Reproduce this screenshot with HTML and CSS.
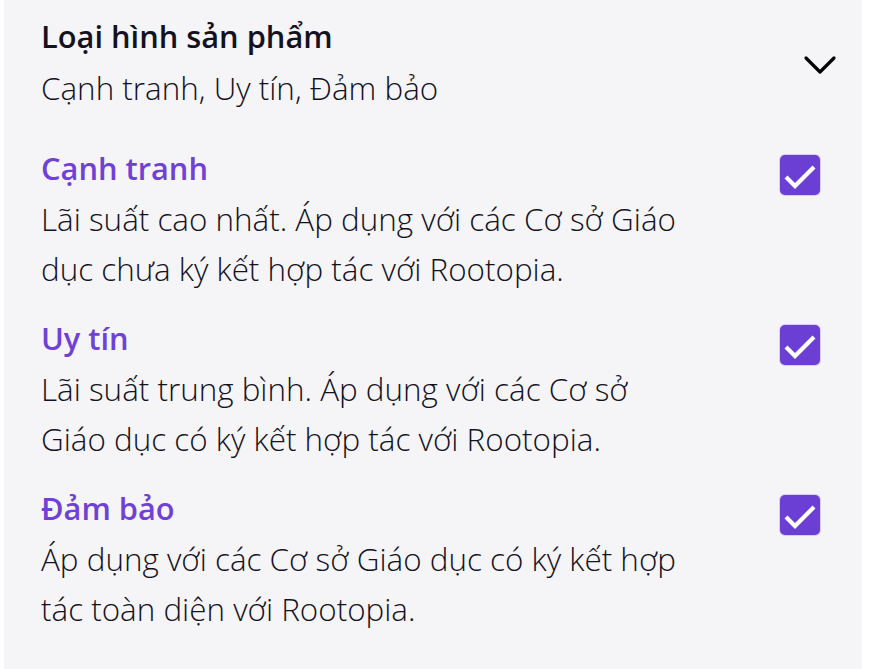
FILE: index.html
```html
<!DOCTYPE html>
<html lang="vi">
<head>
<meta charset="utf-8">
<link rel="stylesheet" href="styles.css">
</head>
<body>
<div class="panel">
  <div class="header">
    <div class="header-text">
      <div class="header-title">Loại hình sản phẩm</div>
      <div class="header-sub">Cạnh tranh, Uy tín, Đảm bảo</div>
    </div>
    <svg class="chevron" width="34" height="20" viewBox="0 0 34 20"><path d="M3 3 L17 17 L31 3" fill="none" stroke="#000" stroke-width="3.2" stroke-linecap="round" stroke-linejoin="round"/></svg>
  </div>
  <div class="items">
    <div class="item">
      <div class="item-text">
        <div class="item-title">Cạnh tranh</div>
        <div class="item-desc">Lãi suất cao nhất. Áp dụng với các Cơ sở Giáo dục chưa ký kết hợp tác với Rootopia.</div>
      </div>
      <div class="check"><svg width="40" height="40" viewBox="0 0 40 40"><path d="M6 22 L15 31 L34 12" fill="none" stroke="#fff" stroke-width="4.2"/></svg></div>
    </div>
    <div class="item">
      <div class="item-text">
        <div class="item-title">Uy tín</div>
        <div class="item-desc">Lãi suất trung bình. Áp dụng với các Cơ sở Giáo dục có ký kết hợp tác với Rootopia.</div>
      </div>
      <div class="check"><svg width="40" height="40" viewBox="0 0 40 40"><path d="M6 22 L15 31 L34 12" fill="none" stroke="#fff" stroke-width="4.2"/></svg></div>
    </div>
    <div class="item">
      <div class="item-text">
        <div class="item-title">Đảm bảo</div>
        <div class="item-desc">Áp dụng với các Cơ sở Giáo dục có ký kết hợp tác toàn diện với Rootopia.</div>
      </div>
      <div class="check"><svg width="40" height="40" viewBox="0 0 40 40"><path d="M6 22 L15 31 L34 12" fill="none" stroke="#fff" stroke-width="4.2"/></svg></div>
    </div>
  </div>
</div>
</body>
</html>
```
FILE: styles.css
```css
html, body {
  margin: 0;
  padding: 0;
  background: #ffffff;
}
body {
  font-family: "Open Sans", "Noto Sans", sans-serif;
  color: #14121f;
}
.panel {
  margin-left: 4px;
  width: 858px;
  min-height: 669px;
  background: #f5f5f8;
  box-sizing: border-box;
  padding: 11px 26px 0 37px;
}
.header {
  display: flex;
  align-items: center;
  justify-content: space-between;
}
.header-title {
  font-size: 30.8px;
  font-weight: 600;
  line-height: 51px;
}
.header-sub {
  font-size: 31.4px;
  font-weight: 300;
  line-height: 52px;
}
.chevron {
  display: block;
  margin-right: -1px;
  margin-top: 5px;
}
.items {
  margin-top: 29px;
  display: flex;
  flex-direction: column;
  gap: 19px;
  padding-right: 16px;
}
.item {
  display: flex;
  justify-content: space-between;
  align-items: flex-start;
}
.item-text {
  width: 648px;
}
.item-title {
  font-size: 30.8px;
  font-weight: 600;
  line-height: 51px;
  color: #7041d6;
}
.item-desc {
  font-size: 31.4px;
  font-weight: 300;
  line-height: 50px;
}
.check {
  margin-top: 12px;
  width: 40px;
  height: 40px;
  border-radius: 5px;
  background: #6b3fd4;
  box-shadow: 0 0 0 1px #d9cdf5;
}
.check svg {
  display: block;
}
```
